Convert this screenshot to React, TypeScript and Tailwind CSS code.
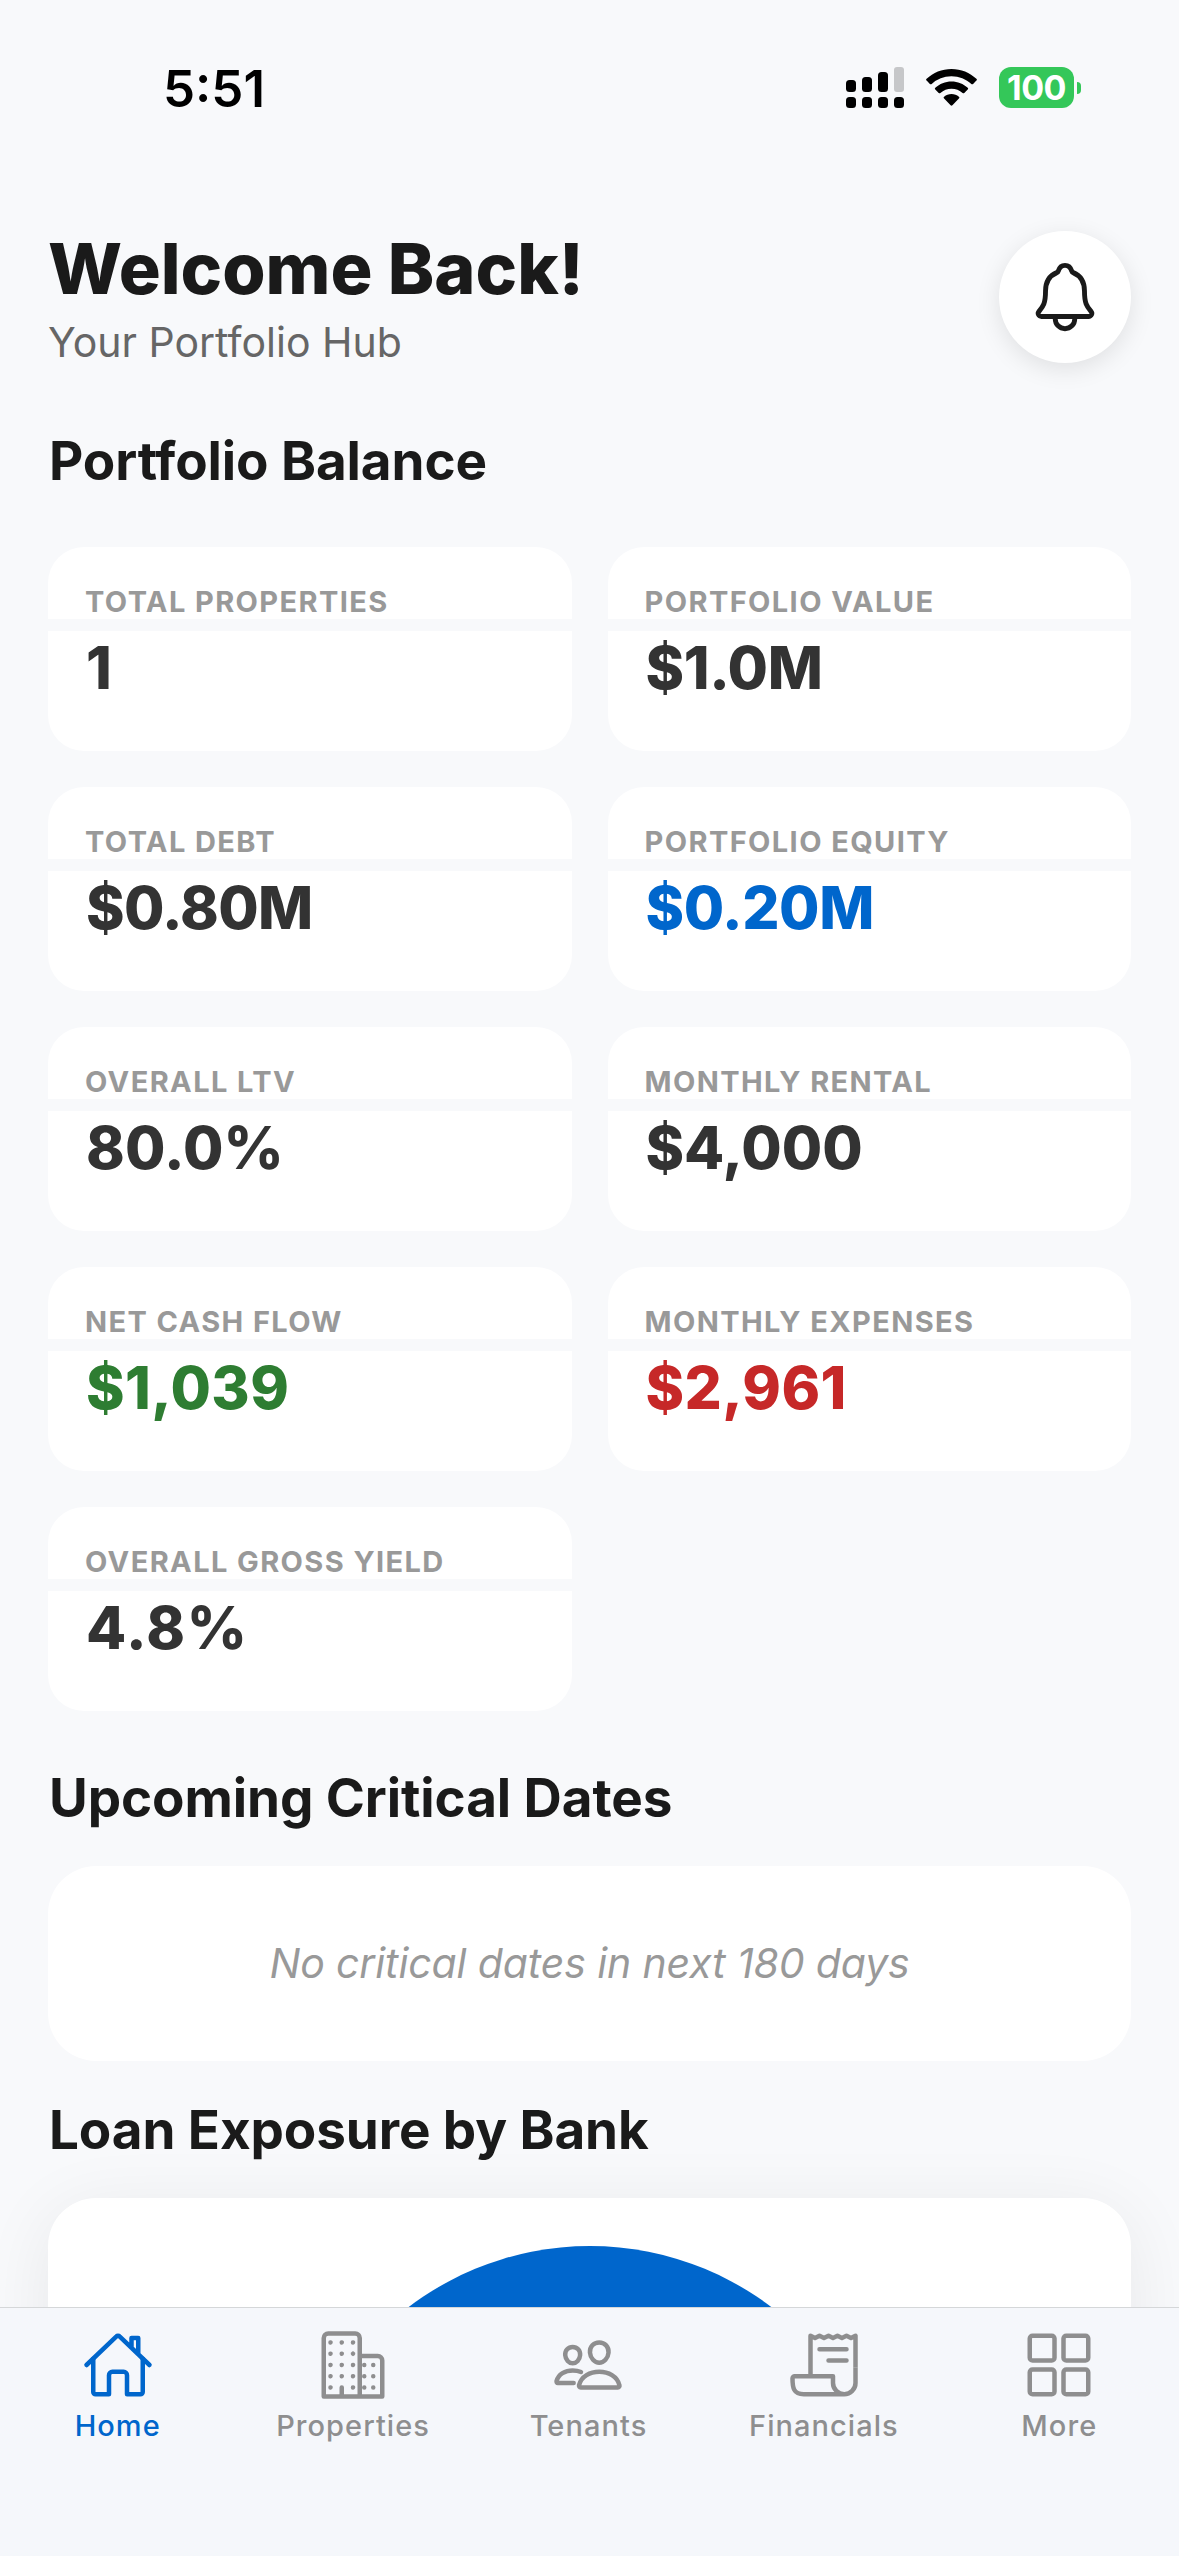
import { IoBusinessOutline, IoGridOutline, IoHomeOutline, IoNotificationsOutline, IoPeopleOutline, IoReceiptOutline } from "react-icons/io5";

const stats = [
    { label: "TOTAL PROPERTIES", value: "1", style: "text-[#333333]" },
    { label: "PORTFOLIO VALUE", value: "$1.0M", style: "text-[#333333] tracking-[-0.4px]" },
    { label: "TOTAL DEBT", value: "$0.80M", style: "text-[#333333] tracking-[-0.7px]" },
    { label: "PORTFOLIO EQUITY", value: "$0.20M", style: "text-[#0066cc] tracking-[-0.4px]" },
    { label: "OVERALL LTV", value: "80.0%", style: "text-[#333333] tracking-[0.2px]" },
    { label: "MONTHLY RENTAL", value: "$4,000", style: "text-[#333333]" },
    { label: "NET CASH FLOW", value: "$1,039", style: "text-[#2e7d32] tracking-[0.4px]" },
    { label: "MONTHLY EXPENSES", value: "$2,961", style: "text-[#c62828] tracking-[0.4px]" },
    { label: "OVERALL GROSS YIELD", value: "4.8%", style: "text-[#333333] tracking-[1.6px]" },
];

const tabs = [
    { name: "Home", Icon: IoHomeOutline, active: true },
    { name: "Properties", Icon: IoBusinessOutline, active: false },
    { name: "Tenants", Icon: IoPeopleOutline, active: false },
    { name: "Financials", Icon: IoReceiptOutline, active: false },
    { name: "More", Icon: IoGridOutline, active: false },
];

function SignalIcon(){
    return(
        <svg className="w-[58px] h-[41px]" viewBox="0 0 58 41">
            <rect x="0" y="13" width="10" height="12" rx="3.5"/>
            <rect x="16" y="10" width="10" height="15" rx="3.5"/>
            <rect x="32" y="5" width="10" height="20" rx="3.5"/>
            <rect x="48" y="0" width="10" height="25" rx="3" fill="#c6c7c9"/>
            <rect x="0" y="30" width="10" height="11" rx="3.5"/>
            <rect x="16" y="30" width="10" height="11" rx="3.5"/>
            <rect x="32" y="30" width="10" height="11" rx="3.5"/>
            <rect x="48" y="30" width="10" height="11" rx="3.5"/>
        </svg>
    )
}

function WifiIcon(){
    return(
        <svg className="w-[51px] h-[37px]" viewBox="0 0 51 37">
            <path d="M25.5 0C15.9 0 7.1 3.7.6 9.8a1.2 1.2 0 0 0 0 1.8l3.3 3.3a1.3 1.3 0 0 0 1.8 0A28.8 28.8 0 0 1 25.5 7.2c7.6 0 14.6 2.9 19.8 7.7a1.3 1.3 0 0 0 1.8 0l3.3-3.3a1.2 1.2 0 0 0 0-1.8C43.9 3.7 35.1 0 25.5 0Z"/>
            <path d="M25.5 12.5c-6.2 0-11.9 2.4-16.2 6.3a1.2 1.2 0 0 0 0 1.8l3.4 3.3a1.3 1.3 0 0 0 1.7 0 16.6 16.6 0 0 1 22.2 0 1.3 1.3 0 0 0 1.7 0l3.4-3.3a1.2 1.2 0 0 0 0-1.8c-4.3-3.9-10-6.3-16.2-6.3Z"/>
            <path d="M25.5 25c-2.8 0-5.4 1-7.4 2.7a1.2 1.2 0 0 0 0 1.8l6.5 6.7a1.3 1.3 0 0 0 1.8 0l6.5-6.700a1.200 1.200 0 0 0 0-1.800c-2-1.700-4.600-2.700-7.400-2.700Z"/>
        </svg>
    )
}

function StatusBar(){
    return(
        <div className="flex shrink-0 items-center justify-between h-[175px] pl-[163px] pr-[98px]">
            <span className="pt-px text-[51px] leading-[51px] font-semibold text-black">5:51</span>
            <div className="flex items-center">
                <SignalIcon/>
                <div className="ml-[22px]"><WifiIcon/></div>
                <div className="flex items-center justify-center w-[75px] h-[41px] ml-[22px] rounded-[12px] bg-[#34c759] text-white text-[34px] leading-[41px] font-bold tracking-[-0.5px]">100</div>
                <div className="w-1 h-3 ml-[3px] rounded-r-full bg-[#34c759]"></div>
            </div>
        </div>
    )
}

function Header(){
    return(
        <div className="flex justify-between mt-14 h-[135px]">
            <div>
                <h1 className="text-[70px] leading-[76px] font-extrabold">Welcome Back!</h1>
                <p className="mt-[11px] text-[41px] leading-[48px] text-[#666666]">Your Portfolio Hub</p>
            </div>
            <button type="button" className="flex items-center justify-center w-[132px] h-[132px] rounded-full bg-white shadow-[0_6px_24px_rgba(0,0,0,0.1)]">
                <IoNotificationsOutline className="w-[78px] h-[78px]"/>
            </button>
        </div>
    )
}

function StatCard({ label, value, style }: { label: string; value: string; style: string }){
    return(
        <div className="flex flex-col h-[204px] rounded-[36px] bg-white overflow-hidden">
            <p className="h-[72px] pt-9 px-[37px] text-[29px] leading-[37px] font-[650] tracking-[1.4px] text-[#999999]">{label}</p>
            <div className="h-3 bg-[#f8f9fb]"></div>
            <p className={`px-[38px] text-[58.5px] leading-[74px] font-extrabold ${style}`}>{value}</p>
        </div>
    )
}

function SectionTitle({ children }: { children: string }){
    return <h2 className="pl-px text-[53px] leading-[61px] -mb-px font-bold tracking-[-0.1px]">{children}</h2>
}

function TabBar(){
    return(
        <nav className="grid grid-cols-5 shrink-0 h-[249px] pt-[21px] pr-[2px] border-t border-[#d5d7d9] bg-[#f5f7fb]">
            {tabs.map(({ name, Icon, active }) => (
                <a key={name} href="/#" className={active ? "flex flex-col items-center text-[#0066cc]" : "flex flex-col items-center text-[#8e8e8f]"}>
                    <Icon className="w-[72px] h-[72px]"/>
                    <span className="mt-[7px] text-[29px] leading-[36px] font-medium tracking-[1.05px]">{name}</span>
                </a>
            ))}
        </nav>
    )
}

function App(){
    return(
        <div className="flex flex-col w-[1179px] h-[2556px] bg-[#f8f9fb] text-[#1a1a1a] font-['Inter',sans-serif] overflow-hidden">
            <StatusBar/>
            <main className="flex-1 min-h-0 px-12 overflow-hidden">
                <Header/>
                <div className="mt-[65px]">
                    <SectionTitle>Portfolio Balance</SectionTitle>
                </div>
                <div className="grid grid-cols-2 gap-9 mt-14">
                    {stats.map((stat) => <StatCard key={stat.label} {...stat}/>)}
                </div>
                <div className="mt-[57px]">
                    <SectionTitle>Upcoming Critical Dates</SectionTitle>
                </div>
                <div className="flex items-center justify-center mt-[38px] h-[195px] rounded-[48px] bg-white">
                    <p className="text-[41px] leading-[48px] pb-px italic tracking-[-0.13px] text-[#999999]">No critical dates in next 180 days</p>
                </div>
                <div className="mt-[39px]">
                    <SectionTitle>Loan Exposure by Bank</SectionTitle>
                </div>
                <div className="flex justify-center mt-[38px] h-[696px] pt-12 rounded-[48px] bg-white shadow-[0_12px_72px_rgba(0,0,0,0.07)]">
                    <div className="w-[600px] h-[600px] rounded-full bg-[#0066cc]"></div>
                </div>
            </main>
            <TabBar/>
        </div>
    )
}

export default App;
